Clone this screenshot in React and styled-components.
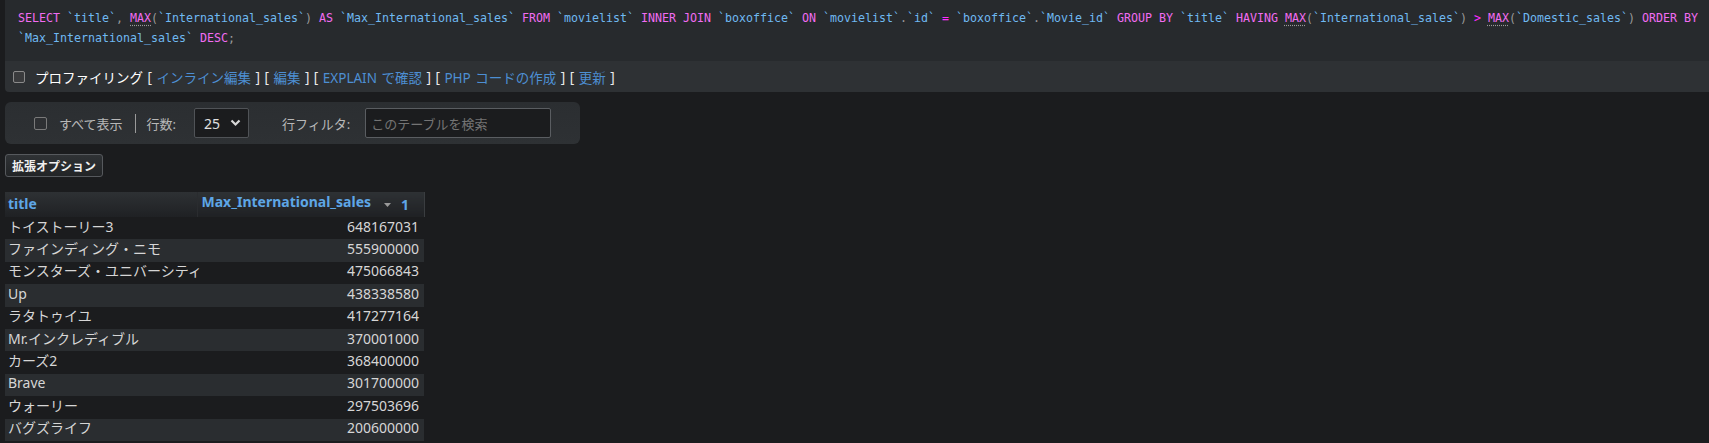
import React from "react";
import styled, { createGlobalStyle } from "styled-components";

const GlobalStyle = createGlobalStyle`
  html, body {
    margin: 0;
    padding: 0;
    background: #1b1c1e;
  }
  body {
    font-family: "Noto Sans", "Noto Sans CJK JP", sans-serif;
    color: #d8d8d8;
  }
`;

const Page = styled.div`
  padding-left: 5px;
  box-sizing: border-box;
`;

const SqlBox = styled.div`
  background: #272a2d;
  padding: 8px 13px 13px 13px;
  font-family: "DejaVu Sans Mono", "Liberation Mono", monospace;
  font-size: 11.63px;
  line-height: 20px;
  white-space: nowrap;
  color: #999;
`;

const Kw = styled.span`
  color: ${(p) => (p.$op ? "#ff2bff" : "#f26cf2")};
`;

const Fn = styled.span`
  color: #f26cf2;
  text-decoration: underline dotted #9a9a9a;
  text-underline-offset: 3px;
`;

const Id = styled.span`
  color: #6fb9f2;
`;

const Punct = styled.span`
  color: #9a9a9a;
`;

const ProfilingBar = styled.div`
  background: #2e3134;
  height: 31px;
  display: flex;
  align-items: center;
  padding-left: 8px;
  border-bottom-left-radius: 4px;
  font-size: 13.5px;
  white-space: pre;
  word-spacing: 1px;
  color: #ececec;
`;

const Check = styled.span`
  display: inline-block;
  width: 10px;
  height: 10px;
  border: 1px solid #8a8a8a;
  background: #3a3b3d;
  border-radius: 2px;
  flex: none;
`;

const ProfLabel = styled.span`
  color: #ffffff;
  margin-left: 10px;
`;

const Link = styled.span`
  color: #4d8fd3;
`;

const Toolbar = styled.div`
  margin-top: 10px;
  width: 575px;
  height: 42px;
  box-sizing: border-box;
  background: linear-gradient(#2b2e31, #2e3134);
  border-radius: 6px;
  display: flex;
  align-items: center;
  padding-left: 29px;
  font-size: 13px;
  color: #b8b8b8;
  white-space: nowrap;
`;

const ToolCheck = styled(Check)`
  width: 11px;
  height: 11px;
  border-color: #7a7a7a;
  background: #2e3033;
`;

const ToolText = styled.span`
  margin-left: ${(p) => p.$ml || 0}px;
`;

const Sep = styled.span`
  display: inline-block;
  width: 1px;
  height: 19px;
  background: #9a9a9a;
  margin: 0 11px 0 12px;
`;

const Select = styled.div`
  margin-left: 18px;
  width: 55px;
  height: 30px;
  box-sizing: border-box;
  background: #1b1c1e;
  border: 1px solid #505357;
  border-radius: 2px;
  display: flex;
  align-items: center;
  justify-content: space-between;
  padding: 0 7px 0 9px;
  color: #e0e0e0;
  font-size: 14px;
`;

const Input = styled.div`
  margin-left: 15px;
  width: 186px;
  height: 30px;
  box-sizing: border-box;
  background: #1b1c1e;
  border: 1px solid #5a5d61;
  border-radius: 2px;
  display: flex;
  align-items: center;
  padding-left: 5px;
  color: #747474;
  font-size: 13px;
`;

const OptButton = styled.div`
  margin-top: 10px;
  width: 98px;
  height: 23px;
  box-sizing: border-box;
  border: 1px solid #56595d;
  border-radius: 3px;
  background: linear-gradient(#2f3235, #222426);
  color: #f0f0f0;
  font-size: 12px;
  font-weight: 700;
  display: flex;
  align-items: center;
  justify-content: center;
`;

const Table = styled.table`
  margin-top: 15px;
  border-collapse: collapse;
  table-layout: fixed;
  width: 419px;
  font-size: 14px;
`;

const Th = styled.th`
  height: 22px;
  padding: 0 3px 2px ${(p) => (p.$last ? 4 : 3)}px;
  box-sizing: border-box;
  text-align: left;
  font-weight: 700;
  color: #5ea6e6;
  background: linear-gradient(#2e3134, #1f2124);
  border-right: 1px solid ${(p) => (p.$last ? "#3a3d40" : "#2a2c2f")};
  white-space: nowrap;
  overflow: hidden;
  line-height: 20px;
`;

const SortMark = styled.span`
  display: inline-flex;
  align-items: center;
  gap: 10px;
  margin-left: 13px;
`;

const Tr = styled.tr`
  background: ${(p) => (p.$alt ? "#2a2d30" : "#1b1c1e")};
`;

const Td = styled.td`
  height: 22.4px;
  padding: 0 5px 3px 3px;
  box-sizing: border-box;
  color: #d6d6d6;
  white-space: nowrap;
  line-height: 18px;
  text-align: ${(p) => (p.$num ? "right" : "left")};
`;

const rows = [
  ["トイストーリー3", "648167031"],
  ["ファインディング・ニモ", "555900000"],
  ["モンスターズ・ユニバーシティ", "475066843"],
  ["Up", "438338580"],
  ["ラタトゥイユ", "417277164"],
  ["Mr.インクレディブル", "370001000"],
  ["カーズ2", "368400000"],
  ["Brave", "301700000"],
  ["ウォーリー", "297503696"],
  ["バグズライフ", "200600000"],
];

const links = ["インライン編集", "編集", "EXPLAIN で確認", "PHP コードの作成", "更新"];

const Q = ({ children }) => <Id>`{children}`</Id>;

export default function App() {
  return (
    <>
      <GlobalStyle />
      <Page>
        <SqlBox>
          <Kw>SELECT</Kw> <Q>title</Q><Punct>,</Punct> <Fn>MAX</Fn>
          <Punct>(</Punct><Q>International_sales</Q><Punct>)</Punct> <Kw>AS</Kw>{" "}
          <Q>Max_International_sales</Q> <Kw>FROM</Kw> <Q>movielist</Q>{" "}
          <Kw>INNER JOIN</Kw> <Q>boxoffice</Q> <Kw>ON</Kw> <Q>movielist</Q>
          <Punct>.</Punct><Q>id</Q> <Kw $op>=</Kw> <Q>boxoffice</Q><Punct>.</Punct>
          <Q>Movie_id</Q> <Kw>GROUP BY</Kw> <Q>title</Q> <Kw>HAVING</Kw>{" "}
          <Fn>MAX</Fn><Punct>(</Punct><Q>International_sales</Q><Punct>)</Punct>{" "}
          <Kw $op>&gt;</Kw> <Fn>MAX</Fn><Punct>(</Punct><Q>Domestic_sales</Q>
          <Punct>)</Punct> <Kw>ORDER BY</Kw>
          <br />
          <Q>Max_International_sales</Q> <Kw>DESC</Kw><Punct>;</Punct>
        </SqlBox>
        <ProfilingBar>
          <Check />
          <ProfLabel>プロファイリング</ProfLabel>
          {links.map((l) => (
            <React.Fragment key={l}>
              {" [ "}
              <Link>{l}</Link>
              {" ]"}
            </React.Fragment>
          ))}
        </ProfilingBar>

        <Toolbar>
          <ToolCheck />
          <ToolText $ml={12}>すべて表示</ToolText>
          <Sep />
          <ToolText>行数:</ToolText>
          <Select>
            <span>25</span>
            <svg width="11" height="8" viewBox="0 0 11 8">
              <path d="M1.5 1.5 L5.5 5.5 L9.5 1.5" fill="none" stroke="#d8d8d8" strokeWidth="2.2" />
            </svg>
          </Select>
          <ToolText $ml={33}>行フィルタ:</ToolText>
          <Input>このテーブルを検索</Input>
        </Toolbar>

        <OptButton>拡張オプション</OptButton>

        <Table>
          <colgroup>
            <col style={{ width: 192 }} />
            <col style={{ width: 227 }} />
          </colgroup>
          <thead>
            <tr>
              <Th>title</Th>
              <Th $last>
                Max_International_sales
                <SortMark>
                  <svg width="7" height="4" viewBox="0 0 7 4">
                    <path d="M0 0 L7 0 L3.5 4 Z" fill="#9a9a9a" />
                  </svg>
                  <span>1</span>
                </SortMark>
              </Th>
            </tr>
          </thead>
          <tbody>
            {rows.map(([t, n], i) => (
              <Tr key={t} $alt={i % 2 === 1}>
                <Td>{t}</Td>
                <Td $num>{n}</Td>
              </Tr>
            ))}
          </tbody>
        </Table>
      </Page>
    </>
  );
}
